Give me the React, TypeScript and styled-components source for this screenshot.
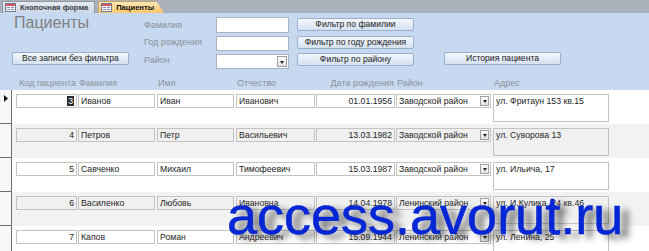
import React from "react";
import styled, { createGlobalStyle } from "styled-components";

const Global = createGlobalStyle`
  html, body { margin: 0; padding: 0; background: #ffffff; }
  body { font-family: "Liberation Sans", Arial, sans-serif; }
  * { box-sizing: border-box; }
`;

const Page = styled.div`
  position: relative;
  width: 649px;
  height: 251px;
  overflow: hidden;
  background: #ffffff;
  display: flex;
  flex-direction: column;
`;

const TabBar = styled.div`
  height: 13px;
  flex: 0 0 13px;
  background: #aab1ba;
  display: flex;
  align-items: flex-end;
  padding-left: 2px;
  gap: 3px;
`;

const Tab = styled.div<{ $active?: boolean }>`
  height: 12px;
  display: flex;
  align-items: center;
  gap: 4px;
  padding: 0 ${(p) => (p.$active ? "9px" : "6px")} 0 2px;
  font-size: 7.6px;
  font-weight: bold;
  color: ${(p) => (p.$active ? "#111" : "#3a3f47")};
  background: ${(p) =>
    p.$active
      ? "linear-gradient(#ffe7b8, #fbc66c)"
      : "linear-gradient(#e6ebf2, #cdd6e2)"};
  border: 1px solid ${(p) => (p.$active ? "#c9a35e" : "#8d96a3")};
  border-bottom: none;
  border-radius: 2px 2px 0 0;
  clip-path: ${(p) =>
    p.$active ? "polygon(0 0, 88% 0, 100% 100%, 0 100%)" : "none"};
  white-space: nowrap;
`;

const Header = styled.div`
  background: #c6d9f0;
  height: 77px;
  flex: 0 0 77px;
  display: flex;
  flex-direction: column;
`;

const TopGrid = styled.div`
  display: grid;
  grid-template-columns: 132px 72px 73px 125px 147px;
  grid-template-rows: 18px 18px 17px;
  padding: 4px 0 0 12px;
`;

const Title = styled.div`
  grid-column: 1;
  grid-row: 1 / 3;
  margin-top: -3px;
  margin-left: 2px;
  font-size: 16px;
  line-height: 18px;
  color: #7f7f7f;
`;

const FieldLabel = styled.div<{ $row: number }>`
  grid-column: 2;
  grid-row: ${(p) => p.$row};
  font-size: 9px;
  line-height: 15px;
  color: #8a8f98;
  padding-top: ${(p) => (p.$row === 1 ? "1px" : "0")};
`;

const TextInput = styled.div<{ $row: number; $h: number }>`
  grid-column: 3;
  grid-row: ${(p) => p.$row};
  height: ${(p) => p.$h}px;
  margin-top: ${(p) => (p.$row === 1 ? 0 : 1)}px;
  background: #ffffff;
  border: 1px solid #a9b3c1;
  position: relative;
`;

const ComboArrow = styled.div<{ $size: number }>`
  position: absolute;
  right: 1px;
  top: 1px;
  bottom: 1px;
  width: ${(p) => p.$size}px;
  background: linear-gradient(#fbfbfb, #e4e4e4);
  border: 1px solid #a0a0a0;
  display: flex;
  align-items: center;
  justify-content: center;
  &::after {
    content: "";
    border-left: 2.5px solid transparent;
    border-right: 2.5px solid transparent;
    border-top: 3px solid #222;
    margin-top: 1px;
  }
`;

const Button = styled.div<{ $col: number; $row: number; $ml: number; $mt: number }>`
  grid-column: ${(p) => p.$col};
  grid-row: ${(p) => p.$row};
  margin-left: ${(p) => p.$ml}px;
  margin-top: ${(p) => p.$mt}px;
  width: 117px;
  height: 13px;
  background: linear-gradient(#f3f7fc, #d5e1f1);
  border: 1px solid #9aaecb;
  border-radius: 2px;
  font-size: 8.6px;
  line-height: 11px;
  text-align: center;
  color: #222;
  white-space: nowrap;
  overflow: hidden;
`;

const ColumnHeads = styled.div`
  flex: 1;
  display: flex;
  align-items: flex-end;
  padding: 0 0 1px 12px;
`;

const HeadLabel = styled.div<{ $w: number; $ml: number; $align: string }>`
  width: ${(p) => p.$w}px;
  margin-left: ${(p) => p.$ml}px;
  text-align: ${(p) => p.$align};
  font-size: 9px;
  line-height: 12px;
  color: #8c9199;
  padding: 0 1px;
  white-space: nowrap;
`;

const Record = styled.div<{ $alt: boolean }>`
  height: 34px;
  flex: 0 0 34px;
  display: flex;
  align-items: flex-start;
  background: ${(p) => (p.$alt ? "#f2f2f2" : "#ffffff")};
`;

const Selector = styled.div`
  width: 12px;
  height: 34px;
  flex: 0 0 12px;
  background: #f6f7f9;
  border-right: 1px solid #6e6e6e;
  border-bottom: 1px solid #6e6e6e;
  display: flex;
  align-items: flex-start;
  padding: 5px 0 0 4px;
`;

const Field = styled.div<{
  $w: number;
  $ml: number;
  $h: number;
  $align: string;
  $alt: boolean;
}>`
  position: relative;
  width: ${(p) => p.$w}px;
  height: ${(p) => p.$h}px;
  margin-left: ${(p) => p.$ml}px;
  margin-top: 4px;
  background: ${(p) => (p.$alt ? "#f0f0f0" : "#ffffff")};
  border: 1px solid #c3c3c3;
  font-size: 8.7px;
  line-height: 12px;
  color: #1e1e1e;
  text-align: ${(p) => p.$align};
  padding: 0 2px;
  white-space: nowrap;
  overflow: hidden;
`;

const Selected = styled.span`
  background: #2a2a2a;
  color: #ffffff;
  padding: 0 1px;
`;

const Watermark = styled.div`
  position: absolute;
  left: 227px;
  top: 188px;
  font-family: "Liberation Sans", Arial, sans-serif;
  font-size: 54px;
  line-height: 54px;
  color: #0526d4;
  -webkit-text-stroke: 0.6px #0526d4;
  text-shadow: 8px 4px 7px rgba(30, 30, 30, 0.7);
  white-space: nowrap;
  pointer-events: none;
`;

const FormIcon = () => (
  <svg width="11" height="9" viewBox="0 0 11 9">
    <rect x="0.5" y="0.5" width="10" height="8" fill="#fff" stroke="#6f7d92" />
    <rect x="1" y="1" width="9" height="2" fill="#d9535f" />
    <rect x="2" y="4" width="3" height="1" fill="#7a8aa5" />
    <rect x="6" y="4" width="3" height="1" fill="#7a8aa5" />
    <rect x="2" y="6" width="3" height="1" fill="#7a8aa5" />
    <rect x="6" y="6" width="3" height="1" fill="#7a8aa5" />
  </svg>
);

const Pointer = () => (
  <svg width="4" height="7" viewBox="0 0 4 7">
    <polygon points="0,0 4,3.5 0,7" fill="#111" />
  </svg>
);

type Col = { key: string; head: string; w: number; ml: number; align: string; h: number; combo?: boolean };

const cols: Col[] = [
  { key: "id", head: "Код пациента", w: 61, ml: 4, align: "right", h: 14 },
  { key: "last", head: "Фамилия", w: 77, ml: 1, align: "left", h: 14 },
  { key: "first", head: "Имя", w: 77, ml: 2, align: "left", h: 14 },
  { key: "middle", head: "Отчество", w: 79, ml: 2, align: "left", h: 14 },
  { key: "dob", head: "Дата рождения", w: 79, ml: 1, align: "right", h: 14 },
  { key: "district", head: "Район", w: 95, ml: 1, align: "left", h: 14, combo: true },
  { key: "addr", head: "Адрес", w: 116, ml: 2, align: "left", h: 28 },
];

const rows: Record<string, string>[] = [
  { id: "3", last: "Иванов", first: "Иван", middle: "Иванович", dob: "01.01.1956", district: "Заводской район", addr: "ул. Фритаун 153 кв.15" },
  { id: "4", last: "Петров", first: "Петр", middle: "Васильевич", dob: "13.03.1982", district: "Заводской район", addr: "ул. Суворова 13" },
  { id: "5", last: "Савченко", first: "Михаил", middle: "Тимофеевич", dob: "15.03.1987", district: "Заводской район", addr: "ул. Ильича, 17" },
  { id: "6", last: "Василенко", first: "Любовь", middle: "Ивановна", dob: "14.04.1978", district: "Ленинский район", addr: "ул. И.Кулика, 24 кв.46" },
  { id: "7", last: "Капов", first: "Роман", middle: "Андреевич", dob: "15.09.1944", district: "Ленинский район", addr: "ул. Ленина, 25" },
];

export default function App() {
  return (
    <>
      <Global />
      <Page>
        <TabBar>
          <Tab>
            <FormIcon />
            Кнопочная форма
          </Tab>
          <Tab $active>
            <FormIcon />
            Пациенты
          </Tab>
        </TabBar>
        <Header>
          <TopGrid>
            <Title>Пациенты</Title>
            <FieldLabel $row={1}>Фамилия</FieldLabel>
            <FieldLabel $row={2}>Год рождения</FieldLabel>
            <FieldLabel $row={3}>Район</FieldLabel>
            <TextInput $row={1} $h={16} />
            <TextInput $row={2} $h={15} />
            <TextInput $row={3} $h={15}>
              <ComboArrow $size={10} />
            </TextInput>
            <Button $col={4} $row={1} $ml={8} $mt={1}>Фильтр по фамилии</Button>
            <Button $col={4} $row={2} $ml={8} $mt={1}>Фильтр по году рождения</Button>
            <Button $col={4} $row={3} $ml={8} $mt={0}>Фильтр по району</Button>
            <Button $col={1} $row={3} $ml={0} $mt={-1}>Все записи без фильтра</Button>
            <Button $col={5} $row={3} $ml={30} $mt={-1}>История пациента</Button>
          </TopGrid>
          <ColumnHeads>
            {cols.map((c) => (
              <HeadLabel key={c.key} $w={c.w} $ml={c.ml} $align={c.align}>
                {c.head}
              </HeadLabel>
            ))}
          </ColumnHeads>
        </Header>
        {rows.map((r, i) => {
          const alt = i % 2 === 1;
          return (
            <Record key={r.id} $alt={alt}>
              <Selector>{i === 0 && <Pointer />}</Selector>
              {cols.map((c) => (
                <Field key={c.key} $w={c.w} $ml={c.ml} $h={c.h} $align={c.align} $alt={alt}>
                  {i === 0 && c.key === "id" ? <Selected>{r[c.key]}</Selected> : r[c.key]}
                  {c.combo && <ComboArrow $size={9} />}
                </Field>
              ))}
            </Record>
          );
        })}
        <Watermark>access.avorut.ru</Watermark>
      </Page>
    </>
  );
}
